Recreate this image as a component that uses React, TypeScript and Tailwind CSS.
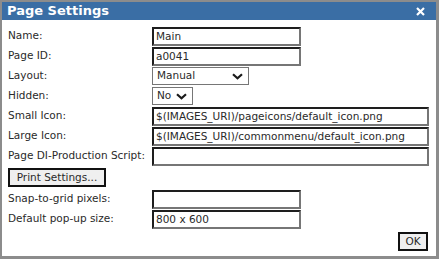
import React from 'react'

const font = { fontFamily: '"DejaVu Sans", Verdana, sans-serif' }

const TextBox = ({ value, wide }: { value: string; wide?: boolean }) => (
  <div
    className={`h-[19px] ${wide ? 'w-[277px]' : 'w-[149px]'} border-2 border-t-[#1e1e1e] border-l-[#1e1e1e] border-r-[#767676] border-b-[#767676] bg-white pl-[2px] text-[10.5px] leading-[15px] text-[#2a2a2a]`}
  >
    {value}
  </div>
)

const Chevron = () => (
  <svg width="11" height="7" viewBox="0 0 11 7" className="shrink-0">
    <path d="M1 1.2 L5.5 5.2 L10 1.2" fill="none" stroke="#1a1a1a" strokeWidth="2.2" />
  </svg>
)

const Select = ({ value, width }: { value: string; width: string }) => (
  <div
    className={`h-[18px] ${width} flex items-center justify-between border border-[#767676] bg-white pl-[4px] pr-[5px] text-[10.5px] text-[#2a2a2a]`}
  >
    <span>{value}</span>
    <Chevron />
  </div>
)

const Row = ({ label, children }: { label: string; children: React.ReactNode }) => (
  <div className="flex h-[20px] items-center">
    <div className="w-[144px] text-[10.5px] text-[#2a2a2a]">{label}</div>
    {children}
  </div>
)

export default function App() {
  return (
    <div className="h-[259px] w-[439px] bg-[#8c8c8c] pb-[3px] pl-[2px] pr-[3px] pt-[2px]" style={font}>
      <div className="flex h-full flex-col bg-white">
        <div className="flex h-[18px] items-center justify-between bg-[#3a6ea5] pl-[5px] pr-[11px]">
          <span className="text-[13px] font-bold text-white">Page Settings</span>
          <svg width="9" height="9" viewBox="0 0 9 9">
            <path d="M1 1 L8 8 M8 1 L1 8" stroke="white" strokeWidth="2.2" />
          </svg>
        </div>
        <div className="flex flex-col px-[6px] pt-[6px]">
          <Row label="Name:">
            <TextBox value="Main" />
          </Row>
          <Row label="Page ID:">
            <TextBox value="a0041" />
          </Row>
          <Row label="Layout:">
            <Select value="Manual" width="w-[97px]" />
          </Row>
          <Row label="Hidden:">
            <Select value="No" width="w-[41px]" />
          </Row>
          <Row label="Small Icon:">
            <TextBox value="$(IMAGES_URI)/pageicons/default_icon.png" wide />
          </Row>
          <Row label="Large Icon:">
            <TextBox value="$(IMAGES_URI)/commonmenu/default_icon.png" wide />
          </Row>
          <Row label="Page DI-Production Script:">
            <TextBox value="" wide />
          </Row>
          <div className="flex h-[23px] items-center">
            <button className="h-[19px] w-[98px] border-2 border-[#111] bg-[#efefef] text-[10.5px] text-[#2a2a2a]">
              Print Settings...
            </button>
          </div>
          <Row label="Snap-to-grid pixels:">
            <TextBox value="" />
          </Row>
          <Row label="Default pop-up size:">
            <TextBox value="800 x 600" />
          </Row>
          <div className="flex justify-end pr-[2px] pt-[3px]">
            <button className="h-[19px] w-[30px] border-2 border-[#111] bg-[#efefef] text-[10.5px] text-[#2a2a2a]">
              OK
            </button>
          </div>
        </div>
      </div>
    </div>
  )
}
